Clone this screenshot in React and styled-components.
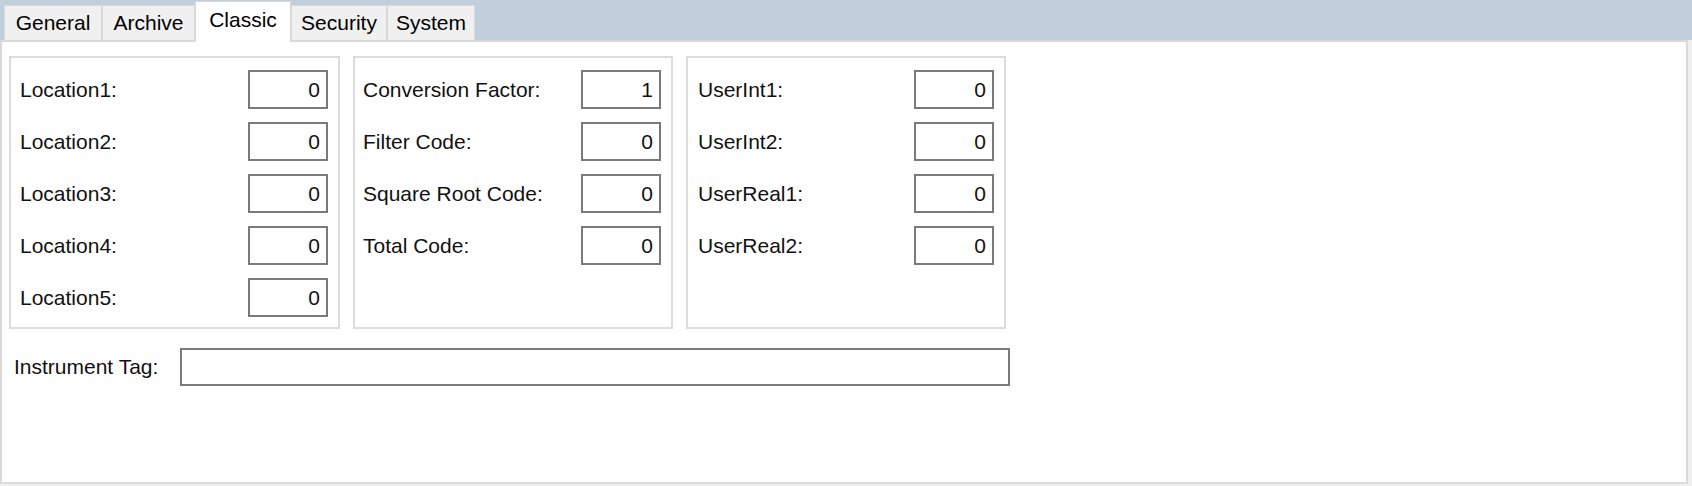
import React from "react";
import styled, { createGlobalStyle } from "styled-components";

const GlobalStyle = createGlobalStyle`
  body {
    margin: 0;
    background: #f0f0f0;
    font-family: "Liberation Sans", Arial, sans-serif;
  }
`;

const tabs = [
  { name: "General", width: 98 },
  { name: "Archive", width: 93 },
  { name: "Classic", width: 96, active: true },
  { name: "Security", width: 96 },
  { name: "System", width: 88 },
];

const groups = [
  {
    pad: 11,
    width: 331,
    fields: [
      ["Location1:", "0"],
      ["Location2:", "0"],
      ["Location3:", "0"],
      ["Location4:", "0"],
      ["Location5:", "0"],
    ],
  },
  {
    pad: 10,
    width: 320,
    fields: [
      ["Conversion Factor:", "1"],
      ["Filter Code:", "0"],
      ["Square Root Code:", "0"],
      ["Total Code:", "0"],
    ],
  },
  {
    pad: 12,
    width: 320,
    fields: [
      ["UserInt1:", "0"],
      ["UserInt2:", "0"],
      ["UserReal1:", "0"],
      ["UserReal2:", "0"],
    ],
  },
];

function App() {
  return (
    <Window>
      <GlobalStyle />
      <TabStrip>
        {tabs.map((t) => (
          <Tab key={t.name} $width={t.width} $active={t.active}>
            {t.name}
          </Tab>
        ))}
      </TabStrip>
      <Panel>
        <Groups>
          {groups.map((g, i) => (
            <Group key={i} $pad={g.pad} $width={g.width}>
              {g.fields.map(([label, value]) => (
                <Field key={label}>
                  <Label>{label}</Label>
                  <NumberBox>{value}</NumberBox>
                </Field>
              ))}
            </Group>
          ))}
        </Groups>
        <TagRow>
          <TagLabel>Instrument Tag:</TagLabel>
          <TagBox />
        </TagRow>
      </Panel>
    </Window>
  );
}

const Window = styled.div`
  width: 1692px;
  height: 486px;
  background: #f0f0f0;
  overflow: hidden;
`;

const TabStrip = styled.div`
  height: 40px;
  background: #c1cedb;
  display: flex;
  align-items: flex-end;
  padding-left: 4px;
  box-sizing: border-box;
`;

const Tab = styled.div`
  position: relative;
  z-index: 1;
  width: ${(p) => p.$width}px;
  height: ${(p) => (p.$active ? 41 : 35)}px;
  margin-bottom: ${(p) => (p.$active ? -2 : 0)}px;
  box-sizing: border-box;
  border: 1px solid #d9d9d9;
  border-bottom: none;
  background: ${(p) => (p.$active ? "#ffffff" : "#f0f0f0")};
  display: flex;
  justify-content: center;
  align-items: center;
  padding-bottom: ${(p) => (p.$active ? 4 : 0)}px;
  font-size: 21px;
  color: #000;
`;

const Panel = styled.div`
  width: 1688px;
  height: 444px;
  box-sizing: border-box;
  border: 2px solid #dadada;
  background: #fff;
  padding: 14px 0 0 7px;
`;

const Groups = styled.div`
  display: flex;
  gap: 13px;
`;

const Group = styled.div`
  width: ${(p) => p.$width}px;
  height: 273px;
  box-sizing: border-box;
  border: 2px solid #dcdcdc;
  padding: 12px 10px 0 ${(p) => p.$pad - 2}px;
  display: flex;
  flex-direction: column;
  gap: 13px;
`;

const Field = styled.div`
  display: flex;
  align-items: center;
  justify-content: space-between;
`;

const Label = styled.span`
  font-size: 21px;
  color: #111;
  white-space: nowrap;
`;

const NumberBox = styled.div`
  width: 80px;
  height: 39px;
  box-sizing: border-box;
  border: 2px solid #7a7a7a;
  background: #fff;
  display: flex;
  align-items: center;
  justify-content: flex-end;
  padding-right: 6px;
  font-size: 21px;
  color: #111;
`;

const TagRow = styled.div`
  display: flex;
  align-items: center;
  margin-top: 19px;
  padding-left: 5px;
`;

const TagLabel = styled(Label)`
  flex: 0 0 166px;
`;

const TagBox = styled.div`
  width: 830px;
  height: 38px;
  box-sizing: border-box;
  border: 2px solid #7a7a7a;
  background: #fff;
`;

export default App;
